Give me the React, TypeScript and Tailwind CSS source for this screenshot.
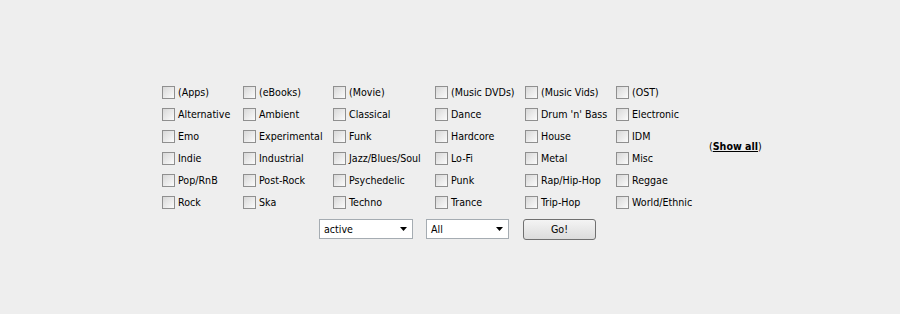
import React from "react";

const cols: string[][] = [
  ["(Apps)", "Alternative", "Emo", "Indie", "Pop/RnB", "Rock"],
  ["(eBooks)", "Ambient", "Experimental", "Industrial", "Post-Rock", "Ska"],
  ["(Movie)", "Classical", "Funk", "Jazz/Blues/Soul", "Psychedelic", "Techno"],
  ["(Music DVDs)", "Dance", "Hardcore", "Lo-Fi", "Punk", "Trance"],
  ["(Music Vids)", "Drum 'n' Bass", "House", "Metal", "Rap/Hip-Hop", "Trip-Hop"],
  ["(OST)", "Electronic", "IDM", "Misc", "Reggae", "World/Ethnic"],
];

const widths = ["w-[81px]", "w-[90px]", "w-[102px]", "w-[90px]", "w-[91px]", "w-[93px]"];

function Box() {
  return (
    <span className="inline-block w-[13px] h-[13px] border border-[#8f8f8f] bg-gradient-to-br from-[#d8d8d8] to-[#fbfbfb] shrink-0" />
  );
}

function Arrow() {
  return (
    <svg width="7" height="4" viewBox="0 0 7 4" className="shrink-0">
      <path d="M0 0 H7 L3.5 4 Z" fill="#000" />
    </svg>
  );
}

export default function App() {
  return (
    <div
      className="w-[900px] h-[314px] bg-[#eeeeee] text-black text-[10.6px] pt-[81px] pl-[162px]"
      style={{ fontFamily: '"DejaVu Sans Condensed", "DejaVu Sans", Tahoma, sans-serif' }}
    >
      <div className="flex">
        {cols.map((c, i) => (
          <div key={i} className={`${widths[i]} flex flex-col`}>
            {c.map((t) => (
              <label key={t} className="h-[22px] flex items-center gap-[3px] whitespace-nowrap">
                <Box />
                <span className="pt-[2px]">{t}</span>
              </label>
            ))}
          </div>
        ))}
        <div className="flex items-center">
          <span className="whitespace-nowrap">
            (<span className="font-bold underline">Show all</span>)
          </span>
        </div>
      </div>
      <div className="flex items-center ml-[157px] mt-[5px] h-[22px]">
        <div className="w-[94px] h-[20px] bg-white border border-[#a5acb2] flex items-center justify-between pl-[4px] pr-[5px]">
          <span className="pt-[1px]">active</span>
          <Arrow />
        </div>
        <div className="w-[83px] h-[20px] bg-white border border-[#a5acb2] flex items-center justify-between pl-[4px] pr-[5px] ml-[13px]">
          <span className="pt-[1px]">All</span>
          <Arrow />
        </div>
        <button className="w-[73px] h-[21px] ml-[14px] border border-[#707070] rounded-[3px] bg-gradient-to-b from-[#f4f4f4] to-[#dcdcdc] flex items-center justify-center pt-[1px]">
          Go!
        </button>
      </div>
    </div>
  );
}
